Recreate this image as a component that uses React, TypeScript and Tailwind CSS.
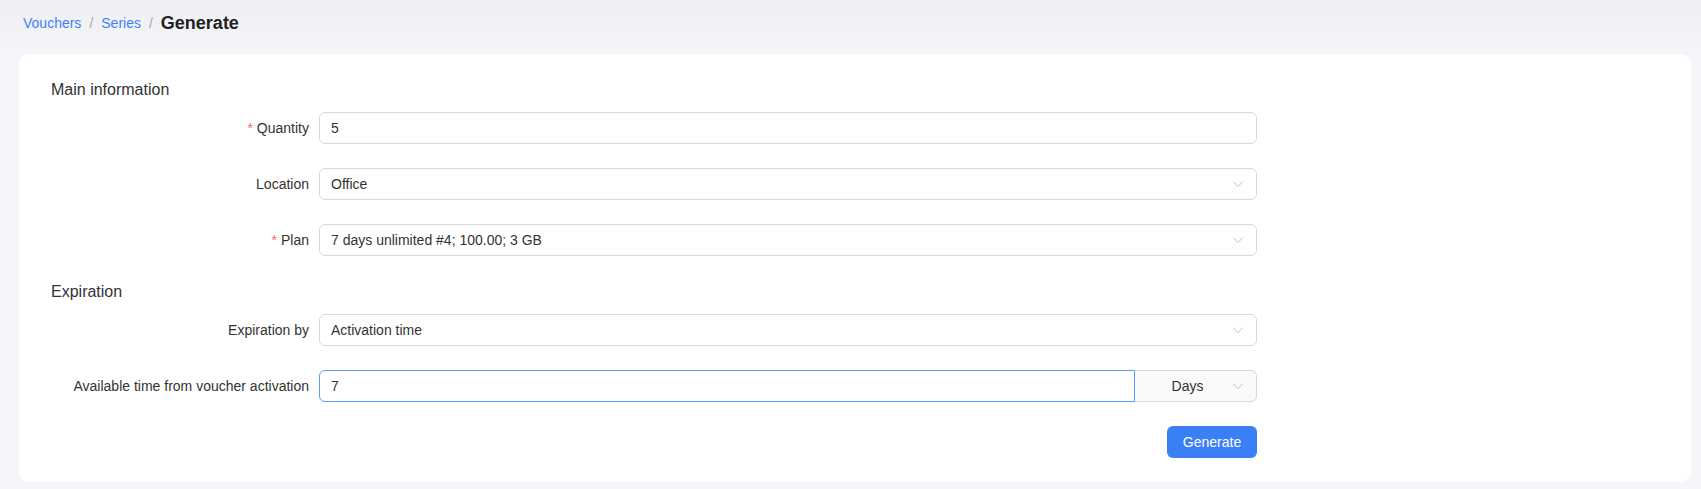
import React from "react";

const Chevron = () => (
  <svg width="12" height="12" viewBox="0 0 12 12" fill="none" className="shrink-0">
    <polyline points="1.5,4 6,8.5 10.5,4" stroke="#bfbfbf" strokeWidth="1" strokeLinecap="round" strokeLinejoin="round" />
  </svg>
);

const Row = ({ label, required, children, last }: { label: string; required?: boolean; children: React.ReactNode; last?: boolean }) => (
  <div className={`flex items-center ${last ? "" : "mb-[24px]"}`}>
    <div className="w-[300px] pr-[10px] text-right text-[14px] text-[#333] leading-[22px]">
      {required && <span className="text-[#f56c6c] mr-[4px]">*</span>}
      {label}
    </div>
    <div className="w-[938px]">{children}</div>
  </div>
);

const Select = ({ value }: { value: string }) => (
  <div className="h-[32px] border border-[#d9d9d9] rounded-[6px] bg-white flex items-center pl-[11px] pr-[12px] text-[14px] text-[#333]">
    <span className="flex-1">{value}</span>
    <Chevron />
  </div>
);

export default function App() {
  return (
    <div className="min-h-[489px] bg-[#f5f6fa] font-['Liberation_Sans',Arial,sans-serif]" style={{ backgroundImage: "linear-gradient(to bottom, #eeeff3 0px, #f5f6fa 60px)" }}>
      <div className="pt-[11px] pl-[23px] h-[54px] flex items-start">
        <div className="flex items-center h-[24px] text-[14px]">
          <span className="text-[#3f82f7]">Vouchers</span>
          <span className="text-[#aaa] mx-[8px]">/</span>
          <span className="text-[#3f82f7]">Series</span>
          <span className="text-[#aaa] mx-[8px]">/</span>
          <span className="text-[18px] font-bold text-[#222]">Generate</span>
        </div>
      </div>
      <div className="ml-[19px] mr-[10px] bg-white rounded-[10px] pt-[24px] pb-[24px] pl-[32px]">
        <div className="text-[16px] leading-[24px] text-[#333] mb-[10px]">Main information</div>
        <div className="-ml-[32px]">
          <Row label="Quantity" required>
            <div className="h-[32px] border border-[#d9d9d9] rounded-[6px] flex items-center pl-[11px] text-[14px] text-[#333]">5</div>
          </Row>
          <Row label="Location">
            <Select value="Office" />
          </Row>
          <Row label="Plan" required last>
            <Select value="7 days unlimited #4; 100.00; 3 GB" />
          </Row>
        </div>
        <div className="text-[16px] leading-[24px] text-[#333] mt-[24px] mb-[10px]">Expiration</div>
        <div className="-ml-[32px]">
          <Row label="Expiration by">
            <Select value="Activation time" />
          </Row>
          <Row label="Available time from voucher activation">
            <div className="flex h-[32px]">
              <div className="flex-1 border border-[#5b9bf8] rounded-l-[6px] flex items-center pl-[11px] text-[14px] text-[#333]">7</div>
              <div className="w-[122px] border border-l-0 border-[#d9d9d9] rounded-r-[6px] bg-[#fafafa] flex items-center pr-[12px] text-[14px] text-[#333]">
                <span className="flex-1 text-center pl-[8px]">Days</span>
                <Chevron />
              </div>
            </div>
          </Row>
          <div className="flex">
            <div className="w-[300px]" />
            <div className="w-[938px] flex justify-end">
              <button className="h-[32px] w-[90px] rounded-[6px] bg-[#3a7ff5] text-white text-[14px]">Generate</button>
            </div>
          </div>
        </div>
      </div>
      <div className="h-[7px]" />
    </div>
  );
}
